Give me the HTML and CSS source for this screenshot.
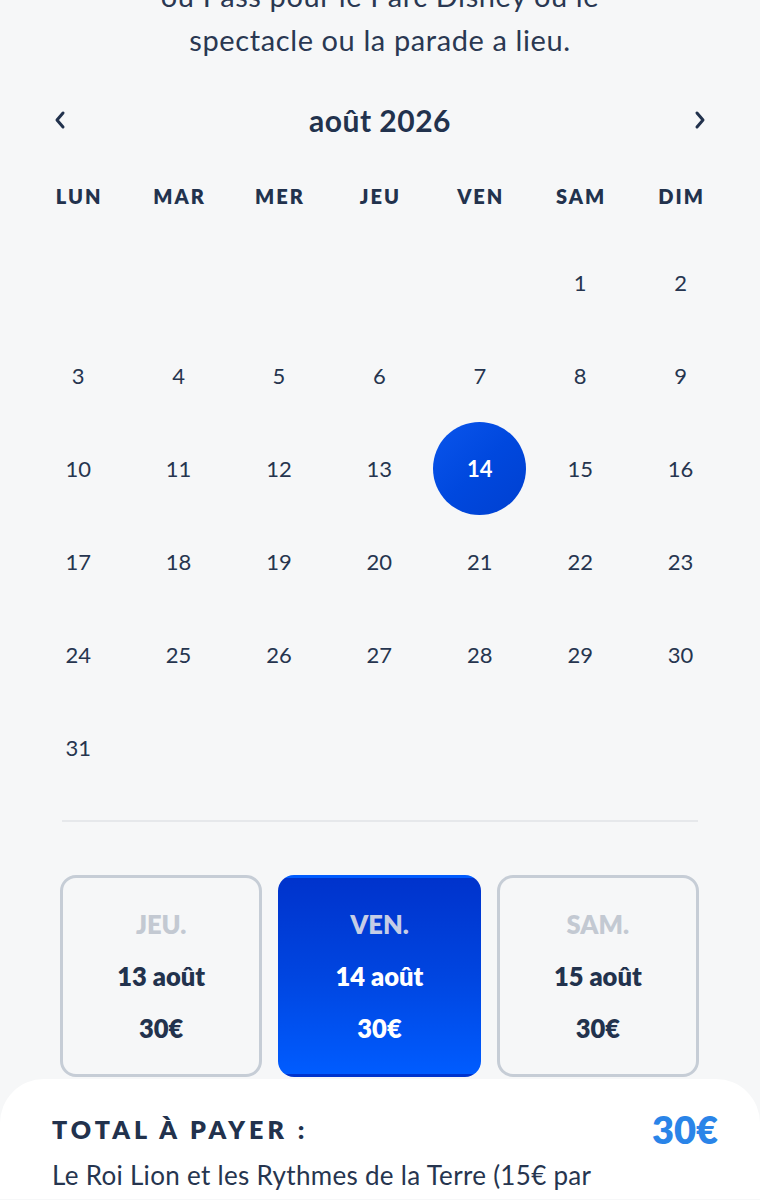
FILE: index.html
```html
<!DOCTYPE html>
<html lang="fr">
<head>
<meta charset="utf-8">
<link rel="stylesheet" href="styles.css">
</head>
<body>
<div class="intro">
  <p>ou Pass pour le Parc Disney où le</p>
  <p>spectacle ou la parade a lieu.</p>
</div>

<div class="month-nav">
  <svg class="chev" width="16" height="24" viewBox="0 0 16 24"><path d="M11 5 L5 12 L11 19" fill="none" stroke="#22324d" stroke-width="3" stroke-linecap="round" stroke-linejoin="round"/></svg>
  <div class="month">août 2026</div>
  <svg class="chev" width="16" height="24" viewBox="0 0 16 24"><path d="M5 5 L11 12 L5 19" fill="none" stroke="#22324d" stroke-width="3" stroke-linecap="round" stroke-linejoin="round"/></svg>
</div>

<div class="panel">
  <div class="grid heads">
    <div>LUN</div><div>MAR</div><div>MER</div><div>JEU</div><div>VEN</div><div>SAM</div><div>DIM</div>
  </div>
  <div class="grid days">
    <div></div><div></div><div></div><div></div><div></div><div class="d">1</div><div class="d">2</div>
    <div class="d">3</div><div class="d">4</div><div class="d">5</div><div class="d">6</div><div class="d">7</div><div class="d">8</div><div class="d">9</div>
    <div class="d">10</div><div class="d">11</div><div class="d">12</div><div class="d">13</div><div class="d"><span class="sel">14</span></div><div class="d">15</div><div class="d">16</div>
    <div class="d">17</div><div class="d">18</div><div class="d">19</div><div class="d">20</div><div class="d">21</div><div class="d">22</div><div class="d">23</div>
    <div class="d">24</div><div class="d">25</div><div class="d">26</div><div class="d">27</div><div class="d">28</div><div class="d">29</div><div class="d">30</div>
    <div class="d">31</div>
  </div>
  <div class="divider"></div>
</div>

<div class="cards">
  <div class="card">
    <div class="wd">JEU.</div>
    <div class="dt">13 août</div>
    <div class="pr">30€</div>
  </div>
  <div class="card active">
    <div class="wd">VEN.</div>
    <div class="dt">14 août</div>
    <div class="pr">30€</div>
  </div>
  <div class="card">
    <div class="wd">SAM.</div>
    <div class="dt">15 août</div>
    <div class="pr">30€</div>
  </div>
</div>

<div class="sheet">
  <div class="total-row">
    <div class="total-label">TOTAL À PAYER :</div>
    <div class="total-val">30€</div>
  </div>
  <div class="desc">Le Roi Lion et les Rythmes de la Terre (15€ par</div>
</div>
</body>
</html>
```

FILE: styles.css
```css
* { box-sizing: border-box; }
html, body { margin: 0; padding: 0; }
body {
  background: #f6f7f8;
  font-family: Lato, "Open Sans", sans-serif;
  color: #26354f;
  width: 760px;
  height: 1200px;
  overflow: hidden;
}
.intro {
  margin-top: -26px;
  text-align: center;
  font-size: 29px;
  line-height: 44px;
  letter-spacing: 0.6px;
  color: #2a3852;
}
.intro p { margin: 0; }

.month-nav {
  margin-top: 36px;
  height: 44px;
  display: flex;
  align-items: center;
  justify-content: space-between;
  padding: 0 52px;
}
.month {
  font-size: 30px;
  font-weight: 700;
  letter-spacing: 0.5px;
  color: #22324d;
}

.panel {
  margin: 36px 30px 0 10px;
  padding: 0 0 0 18px;
}
.grid {
  display: grid;
  grid-template-columns: repeat(7, 100.4px);
}
.heads {
  height: 36px;
  align-items: center;
  text-align: center;
  font-size: 20px;
  font-weight: 800;
  letter-spacing: 2px;
  color: #22324d;
}
.heads div { padding-left: 2px; }
.days {
  margin-top: 22px;
  grid-auto-rows: 93px;
}
.d {
  display: flex;
  align-items: center;
  justify-content: center;
  font-size: 22px;
  color: #26354f;
}
.sel {
  width: 93px;
  height: 93px;
  border-radius: 50%;
  background: linear-gradient(135deg, #0a55ec 0%, #0048de 50%, #0040d0 100%);
  color: #fff;
  display: flex;
  align-items: center;
  justify-content: center;
  font-weight: 700;
}
.divider {
  margin: 26px 0 0 34px;
  width: 636px;
  height: 2px;
  background: #e6e8eb;
}

.cards {
  margin: 53px 61px 0 60px;
  display: grid;
  grid-template-columns: repeat(3, 1fr);
  gap: 16px;
}
.card {
  height: 202px;
  border: 3px solid #c6cdd6;
  border-radius: 16px;
  display: flex;
  flex-direction: column;
  align-items: center;
  padding-top: 30px;
  font-weight: 800;
  font-size: 25.5px;
  line-height: 32px;
  color: #22324d;
}
.card .wd { color: #c3c9d2; }
.card .dt { margin-top: 20px; }
.card .pr { margin-top: 20px; }
.card.active {
  border-color: transparent;
  background: linear-gradient(180deg, #0033cc 0%, #0045e0 50%, #005cff 100%);
  color: #fff;
}
.card.active .wd { color: #c5cde6; }

.sheet {
  margin-top: 2px;
  height: 120px;
  background: #fff;
  border-radius: 44px 44px 0 0;
  padding: 34px 42px 0 52px;
}
.total-row {
  display: flex;
  justify-content: space-between;
  align-items: center;
  height: 32px;
}
.total-label {
  font-size: 25px;
  font-weight: 800;
  letter-spacing: 4px;
  color: #22324d;
}
.total-val {
  font-size: 38px;
  font-weight: 800;
  color: #2a84e8;
}
.desc {
  margin-top: 12px;
  font-size: 26px;
  line-height: 36px;
  letter-spacing: 0.3px;
  color: #26354f;
}
```
